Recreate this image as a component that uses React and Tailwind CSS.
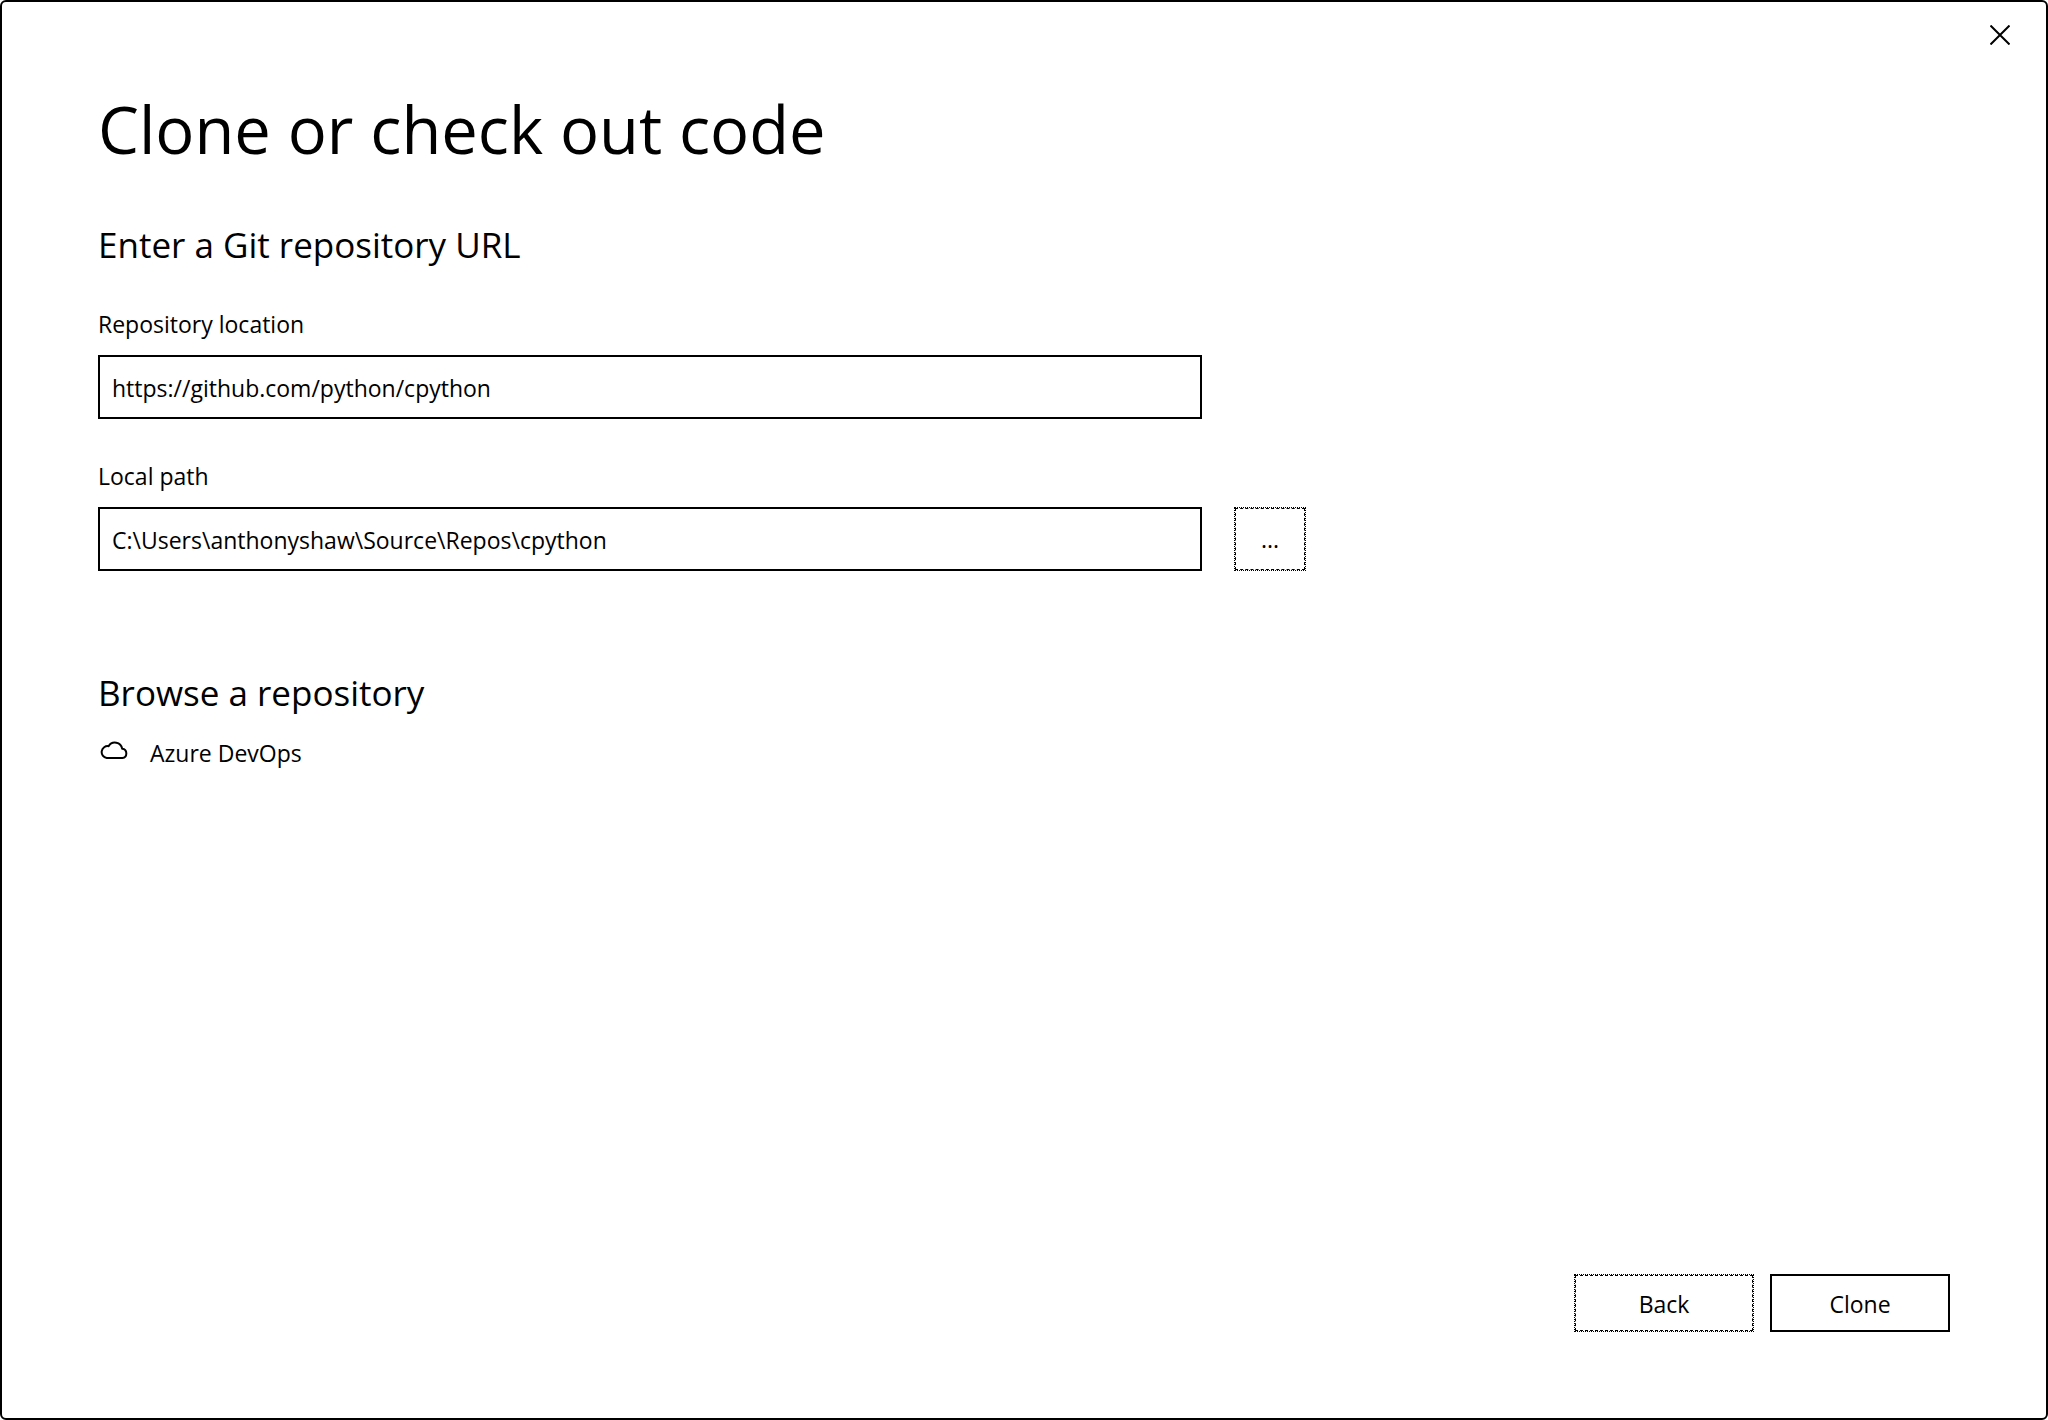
import { useState } from "react";

function CloseIcon() {
  return (
    <svg viewBox="0 0 20 20" className="size-5" fill="none" stroke="currentColor" strokeWidth="2" aria-hidden="true">
      <path d="M0.5 0.5 19.5 19.5M19.5 0.5 0.5 19.5" />
    </svg>
  );
}

function CloudIcon() {
  return (
    <svg viewBox="0 0 28 18" className="mb-1.5 w-7 h-[18px]" fill="none" stroke="currentColor" strokeWidth="2" strokeLinejoin="round" aria-hidden="true">
      <path d="M6.7 17H22.4A4.7 4.7 0 0 0 22.2 7.7A7.4 7.4 0 0 0 8.6 5.2A5.9 5.9 0 1 0 6.7 17Z" />
    </svg>
  );
}

const dotted =
  "relative border border-dotted border-black before:absolute before:inset-0 before:border before:border-dashed before:border-black before:content-['']";

function Field({ id, label, value, onChange, children }) {
  return (
    <div>
      <label htmlFor={id} className="block leading-8">
        {label}
      </label>
      <div className="mt-[15px] flex gap-8">
        <input
          id={id}
          type="text"
          value={value}
          spellCheck={false}
          onChange={(e) => onChange(e.target.value)}
          className="h-16 min-w-0 grow max-w-[1104px] border-2 border-black px-3 pt-0.5 outline-none"
        />
        {children}
      </div>
    </div>
  );
}

export default function App() {
  const [url, setUrl] = useState("https://github.com/python/cpython");
  const [path, setPath] = useState("C:\\Users\\anthonyshaw\\Source\\Repos\\cpython");

  return (
    <div className="bg-white">
      <main className="flex min-h-screen flex-col rounded-md border-2 border-black bg-white font-['Open_Sans','Noto_Sans',sans-serif] text-[23px] text-black">
        <div className="flex justify-end pt-[23px] pr-9">
          <button type="button" aria-label="Close">
            <CloseIcon />
          </button>
        </div>

        <div className="px-24">
          <h1 className="mt-11 text-[65px] leading-20">Clone or check out code</h1>

          <section className="mt-13">
            <h2 className="text-[35px] leading-12">Enter a Git repository URL</h2>
            <div className="mt-[39px] flex flex-col gap-[41px]">
              <Field id="repository" label="Repository location" value={url} onChange={setUrl} />
              <Field id="path" label="Local path" value={path} onChange={setPath}>
                <button type="button" aria-label="Browse for a folder" className={`${dotted} h-16 w-18 shrink-0`}>
                  ...
                </button>
              </Field>
            </div>
          </section>

          <section className="mt-[98px]">
            <h2 className="text-[35px] leading-12">Browse a repository</h2>
            <button type="button" className="mt-5 flex items-center gap-[22px] pl-0.5 leading-8">
              <CloudIcon />
              Azure DevOps
            </button>
          </section>
        </div>

        <footer className="mt-auto flex justify-end gap-4 px-24 pb-[86px]">
          <button type="button" className={`${dotted} h-[58px] w-[180px] pt-0.5`}>
            Back
          </button>
          <button type="button" className="h-[58px] w-[180px] border-2 border-black pt-0.5">
            Clone
          </button>
        </footer>
      </main>
    </div>
  );
}
